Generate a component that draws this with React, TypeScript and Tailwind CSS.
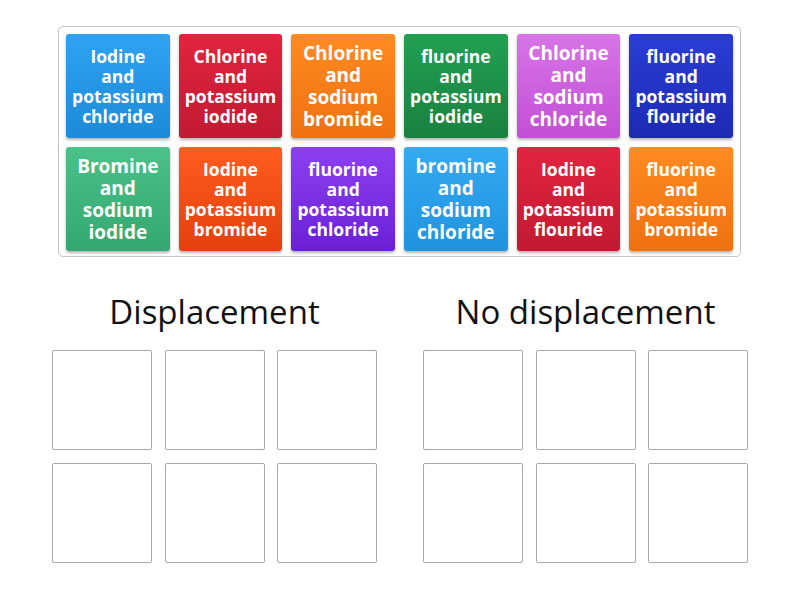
import React from 'react'

type Tile = { words: string[]; big: boolean; bg: string }

const tiles: Tile[] = [
  { words: ['Iodine', 'and', 'potassium', 'chloride'], big: false, bg: 'from-[#2ea3f2] to-[#1c8ad9]' },
  { words: ['Chlorine', 'and', 'potassium', 'iodide'], big: false, bg: 'from-[#e2243f] to-[#c11a32]' },
  { words: ['Chlorine', 'and', 'sodium', 'bromide'], big: true, bg: 'from-[#ff8b21] to-[#ef7110]' },
  { words: ['fluorine', 'and', 'potassium', 'iodide'], big: false, bg: 'from-[#21a052] to-[#1a8140]' },
  { words: ['Chlorine', 'and', 'sodium', 'chloride'], big: true, bg: 'from-[#d874e7] to-[#c24fd6]' },
  { words: ['fluorine', 'and', 'potassium', 'flouride'], big: false, bg: 'from-[#2b3dd6] to-[#1c2ab3]' },
  { words: ['Bromine', 'and', 'sodium', 'iodide'], big: true, bg: 'from-[#4bc28a] to-[#32a76f]' },
  { words: ['Iodine', 'and', 'potassium', 'bromide'], big: false, bg: 'from-[#ff5c20] to-[#e3400c]' },
  { words: ['fluorine', 'and', 'potassium', 'chloride'], big: false, bg: 'from-[#8d3ff0] to-[#6a1fd5]' },
  { words: ['bromine', 'and', 'sodium', 'chloride'], big: true, bg: 'from-[#34aaf2] to-[#1f93df]' },
  { words: ['Iodine', 'and', 'potassium', 'flouride'], big: false, bg: 'from-[#e2243f] to-[#c11a32]' },
  { words: ['fluorine', 'and', 'potassium', 'bromide'], big: false, bg: 'from-[#ff8b21] to-[#ef7110]' },
]

function DropGroup({ title }: { title: string }) {
  return (
    <div className="w-[325px] flex flex-col items-center">
      <div className="h-[40px] text-[33px] leading-[40px] text-[#111]">{title}</div>
      <div className="mt-[18px] grid grid-cols-[100px_100px_100px] gap-x-[12.5px] gap-y-[13px]">
        {Array.from({ length: 6 }).map((_, i) => (
          <div key={i} className="h-[100px] border border-[#a8a8a8] rounded-[2px] bg-white" />
        ))}
      </div>
    </div>
  )
}

export default function App() {
  return (
    <div className="w-[800px] h-[600px] bg-white overflow-hidden pt-[26px]" style={{ fontFamily: '"Open Sans", sans-serif' }}>
      {/* tile bank */}
      <div className="ml-[58px] w-[683px] border border-[#c4c4c4] rounded-[5px] px-[7px] pt-[7px] pb-[5px]">
        <div className="grid grid-cols-6 gap-x-[9px] gap-y-[9px]">
          {tiles.map((t, i) => (
            <div
              key={i}
              className={`h-[104px] rounded-[3px] bg-gradient-to-b ${t.bg} shadow-[0_2px_3px_rgba(0,0,0,0.3)] flex items-center justify-center text-white font-bold text-center`}
            >
              <p className={`whitespace-pre-line ${t.big ? 'text-[19px] leading-[22px]' : 'text-[17.5px] leading-[20px]'}`}>
                {t.words.join('\n')}
              </p>
            </div>
          ))}
        </div>
      </div>

      {/* drop zones */}
      <div className="mt-[35px] flex justify-center gap-[46px]">
        <DropGroup title="Displacement" />
        <DropGroup title="No displacement" />
      </div>
    </div>
  )
}
